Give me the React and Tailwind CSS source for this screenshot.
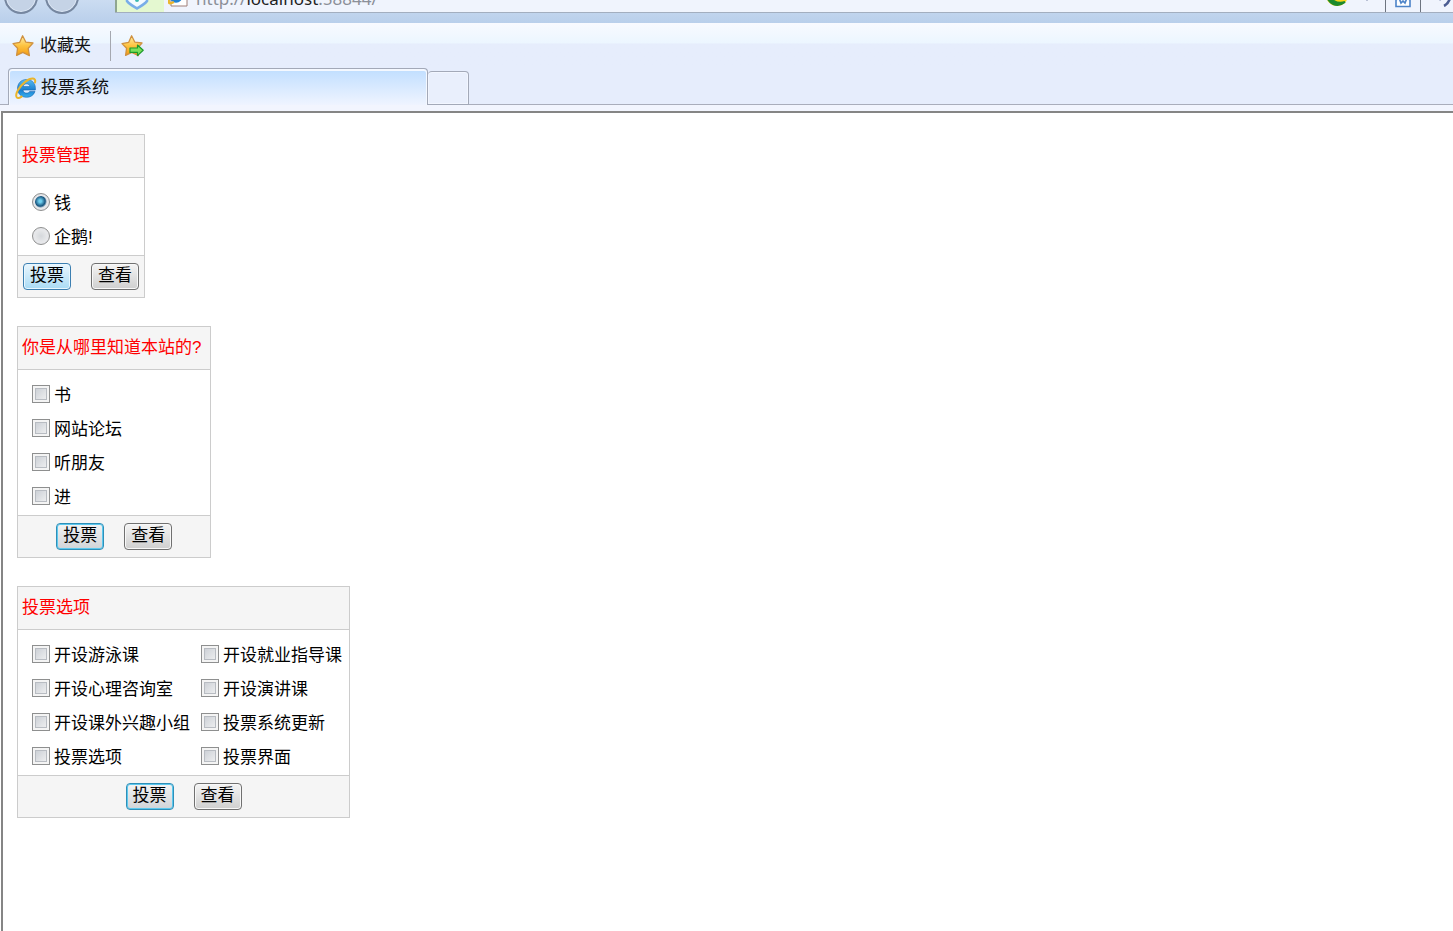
import { useState } from "react";

function StarIcon({ arrow }) {
  return (
    <svg viewBox="0 0 24 24" className="w-6 h-6 shrink-0" aria-hidden="true">
      <defs>
        <linearGradient id="star" x1="0" y1="0" x2="0" y2="1">
          <stop offset="0" stopColor="#fff0a8" />
          <stop offset="0.5" stopColor="#fdc340" />
          <stop offset="1" stopColor="#f39a12" />
        </linearGradient>
      </defs>
      <path
        d="M11.6 1.8 L14.9 8.2 L22 9 L17.2 14.4 L18.4 21.6 L11.8 18.4 L5.6 21.4 L6.6 14.2 L2 9.6 L8.6 8.4 Z"
        fill="url(#star)"
        stroke="#cf9140"
        strokeWidth="1.3"
        strokeLinejoin="round"
      />
      {arrow && (
        <path
          d="M10 14 H17.5 V11 L23.2 16.2 L17.5 21.6 V18.4 H10 Z"
          fill="#7be05a"
          stroke="#1d9a2b"
          strokeWidth="1.2"
          strokeLinejoin="round"
        />
      )}
    </svg>
  );
}

function IeIcon() {
  return (
    <svg viewBox="0 0 22 22" className="w-[22px] h-[22px] shrink-0" aria-hidden="true">
      <defs>
        <linearGradient id="ie" x1="0" y1="0" x2="0" y2="1">
          <stop offset="0" stopColor="#56bdf2" />
          <stop offset="0.6" stopColor="#1a7fd0" />
          <stop offset="1" stopColor="#39b0ee" />
        </linearGradient>
      </defs>
      <path
        fillRule="evenodd"
        d="M11.5 2.5 C6 2.5 2.5 6.5 2.5 11.5 C2.5 16.5 6.2 20.3 11.5 20.3 C15.7 20.3 18.9 18 20 14.4 H14.7 C14 15.6 13 16.1 11.6 16.1 C9.5 16.1 8.2 14.9 8 13 H20.4 C21 6.7 17.3 2.5 11.5 2.5 Z M8.1 9.6 C8.4 7.9 9.7 6.8 11.5 6.8 C13.4 6.8 14.7 7.9 14.9 9.6 Z"
        fill="url(#ie)"
        stroke="#1767b0"
        strokeWidth="0.6"
      />
      <path
        d="M20 5.5 C21.3 0.7 16.5 0 10.5 4.6 C4 9.5 -0.4 17.5 1.8 20.3 C2.8 21.5 4.8 20.8 6.6 19.6"
        fill="none"
        stroke="#e9b52d"
        strokeWidth="2"
        strokeLinecap="round"
      />
    </svg>
  );
}

function AddressBar() {
  return (
    <div className="flex items-end h-[23px] overflow-hidden bg-linear-to-b from-[#cbdcf1] to-[#b9cfeb]">
      <div className="flex gap-[7px] pl-1 pb-[9px] shrink-0">
        <button
          aria-label="后退"
          className="w-[34px] h-[34px] rounded-full border-2 border-[#7687a0] bg-[#c5d3e6] shadow-[inset_0_0_0_1px_#dfe9f6]"
        />
        <button
          aria-label="前进"
          className="w-[34px] h-[34px] rounded-full border-2 border-[#7687a0] bg-[#c5d3e6] shadow-[inset_0_0_0_1px_#dfe9f6]"
        />
      </div>
      <div className="w-[36px] shrink-0" />
      <div className="flex items-end flex-1 h-8 mb-[10px] border-b border-[#a3aebf] bg-[#f0f4fd]">
        <div className="flex justify-center items-end w-[49px] h-8 pr-2 border-l-2 border-[#8fa690] bg-[#e4f8d0]">
          <svg viewBox="0 0 24 24" className="w-6 h-6 mb-[2px]" aria-hidden="true">
            <path
              d="M2 2 H22 V15 C20 18 16 20 12 22.5 C8 20 4 18 2 15 Z"
              fill="#f4fbff"
              stroke="#79aee8"
              strokeWidth="2.6"
            />
            <circle cx="12" cy="14" r="2" fill="#3bb9b0" />
          </svg>
        </div>
        <div className="flex justify-center items-end w-[32px] h-8 pr-1 pb-[5px]">
          <svg viewBox="0 0 20 20" className="w-5 h-5" aria-hidden="true">
            <path d="M3 1 H19 V19 H3 Z" fill="#fff" stroke="#a07f78" />
            <circle cx="8" cy="9" r="5" fill="none" stroke="#2383d2" strokeWidth="3.4" />
            <path d="M1 12 C0 17 2 17 6 15" fill="none" stroke="#e9b52d" strokeWidth="2.4" />
          </svg>
        </div>
        <p className="flex-1 pb-[1px] font-['Noto_Sans',sans-serif] text-[17px] leading-6 text-[#8b8f98]">
          http://<span className="text-[#222]">localhost</span>:58844/
        </p>
        <svg viewBox="0 0 24 24" className="w-6 h-6 mb-[5px]" aria-hidden="true">
          <circle cx="12" cy="12" r="11" fill="#f8d51c" />
          <path
            d="M1.5 11 C3 21 12 25 20 19 C12 22 6 17 1.5 11 Z"
            fill="#1c8a2c"
            stroke="#1c8a2c"
            strokeWidth="2"
          />
          <circle cx="12.5" cy="13" r="1.8" fill="#5b4a00" />
        </svg>
        <svg viewBox="0 0 8 6" className="w-2 h-[6px] mx-[14px] mb-[11px]" aria-hidden="true">
          <path d="M0 0 H8 L4 6 Z" fill="#55618a" />
        </svg>
        <div className="flex justify-center items-end w-9 h-8 border-x border-[#6d7480]">
          <svg viewBox="0 0 18 18" className="w-[18px] h-[18px] mb-1" aria-hidden="true">
            <path
              d="M2 10 V16.5 H16 V10 L13 8 L11 13 L9 11 L7 13 L5 8 Z"
              fill="#fff"
              stroke="#4c83c8"
              strokeWidth="1.6"
            />
          </svg>
        </div>
        <div className="flex justify-end items-end w-[32px] h-8">
          <svg viewBox="0 0 18 18" className="w-[18px] h-[18px] mb-[5px]" aria-hidden="true">
            <path d="M3 6 L6 11 M16 5 C15 12 13 15 9 17" fill="none" stroke="#4b5c92" strokeWidth="2.6" />
          </svg>
        </div>
      </div>
    </div>
  );
}

function BrowserChrome() {
  return (
    <header className="text-[17px] leading-6 text-[#111]">
      <AddressBar />
      <div className="flex items-center h-[45px] pl-[11px] bg-linear-to-b from-[#f8faff] via-[#ecf6ff] via-45% to-[#e6edfc] to-46%">
        <button className="flex items-center gap-[5px]">
          <StarIcon />
          收藏夹
        </button>
        <div className="w-px h-[30px] ml-[19px] mr-[9px] bg-[#a5a8b0]" />
        <button aria-label="添加到收藏夹栏">
          <StarIcon arrow />
        </button>
      </div>
      <nav className="flex items-end h-[37px] bg-[#e6edfc]">
        <div className="w-2 h-full border-b border-[#a9adbb]" />
        <a
          href="#"
          className="flex items-center gap-1 w-[420px] h-full pl-[6px] pt-px rounded-t border border-b-0 border-[#a3a9b8] bg-linear-to-b from-[#c0deff] to-[#eff4ff] shadow-[inset_0_1px_0_1px_#f4f8ff]"
        >
          <IeIcon />
          投票系统
        </a>
        <button
          aria-label="新选项卡"
          className="w-[41px] h-[34px] rounded-t border border-l-0 border-[#a3a9b8] bg-[#e9effc] shadow-[inset_0_0_0_1px_#f2f6ff]"
        />
        <div className="flex-1 h-full border-b border-[#a9adbb]" />
      </nav>
      <div className="h-[6px] bg-[#f2f5fe]" />
    </header>
  );
}

function PollOption({ type, name, label, defaultChecked }) {
  const box =
    type === "radio"
      ? "rounded-full border-[#8e8f8f] bg-radial from-[#d5d8dc] to-[#f6f6f6] shadow-[inset_0_0_0_2px_#e6e7ea] checked:bg-radial-[at_45%_45%] checked:from-[#6fd0f0] checked:from-10% checked:via-[#17547e] checked:via-40% checked:to-[#dfe3e8] checked:to-55%"
      : "border-[#8e8f8f] bg-linear-to-br from-[#c4c9d0] to-[#f6f6f6] shadow-[inset_0_0_0_2px_#f4f4f4,inset_0_0_0_3px_#b8bcc2] checked:from-[#17547e]";
  return (
    <label className="flex items-center gap-1 h-[34px] whitespace-nowrap">
      <input
        type={type}
        name={name}
        defaultChecked={defaultChecked}
        className={`appearance-none shrink-0 w-[18px] h-[18px] border ${box}`}
      />
      <span className="pt-1">{label}</span>
    </label>
  );
}

const buttonStyles = {
  hot: "border-[#3c7fb1] from-[#eaf6fd] to-[#a9dbf5] shadow-[inset_0_0_0_1px_#e8f7ff]",
  focus: "border-[#2f8fb8] from-[#f4f4f4] to-[#d0d4d8] shadow-[inset_0_0_0_1px_#5cc8ee]",
  normal: "border-[#707070] from-[#f4f4f4] to-[#cfcfcf] shadow-[inset_0_0_0_1px_#f8f8f8]",
};

function PollButton({ variant, children }) {
  return (
    <button
      className={`w-12 h-[27px] pb-[2px] rounded border bg-linear-to-b leading-6 ${buttonStyles[variant]}`}
    >
      {children}
    </button>
  );
}

function Poll({ title, type = "checkbox", options, columns, submit = "focus" }) {
  const [selected] = useState(type === "radio" ? 0 : -1);
  return (
    <form
      onSubmit={(e) => e.preventDefault()}
      className="w-fit border border-[#ccc] text-[17px] leading-6 text-black"
    >
      <h2 className="h-[43px] pl-1 pr-[9px] pt-[9px] border-b border-[#ccc] bg-[#f5f5f5] text-[#f00]">
        {title}
      </h2>
      <div
        className={
          columns === 2
            ? "grid grid-cols-[auto_auto] gap-x-[11px] pt-[7px] pb-[2px] pl-[14px] pr-[7px]"
            : "pt-[7px] pb-[2px] pl-[14px]"
        }
      >
        {options.map((label, i) => (
          <PollOption
            key={label}
            type={type}
            name={title}
            label={label}
            defaultChecked={i === selected}
          />
        ))}
      </div>
      <div className="flex justify-center gap-5 h-[42px] px-[5px] pt-[7px] border-t border-[#ccc] bg-[#f5f5f5]">
        <PollButton variant={submit}>投票</PollButton>
        <PollButton variant="normal">查看</PollButton>
      </div>
    </form>
  );
}

export default function App() {
  return (
    <div className="flex flex-col min-h-screen bg-white font-['Liberation_Sans','Noto_Sans_CJK_SC',sans-serif]">
      <BrowserChrome />
      <main className="flex flex-col flex-1 gap-7 ml-px pl-[14px] pt-[21px] border-t-2 border-l-2 border-[#858585]">
        <Poll title="投票管理" type="radio" options={["钱", "企鹅!"]} submit="hot" />
        <Poll
          title="你是从哪里知道本站的?"
          options={["书", "网站论坛", "听朋友", "进"]}
        />
        <Poll
          title="投票选项"
          columns={2}
          options={[
            "开设游泳课",
            "开设就业指导课",
            "开设心理咨询室",
            "开设演讲课",
            "开设课外兴趣小组",
            "投票系统更新",
            "投票选项",
            "投票界面",
          ]}
        />
      </main>
    </div>
  );
}
